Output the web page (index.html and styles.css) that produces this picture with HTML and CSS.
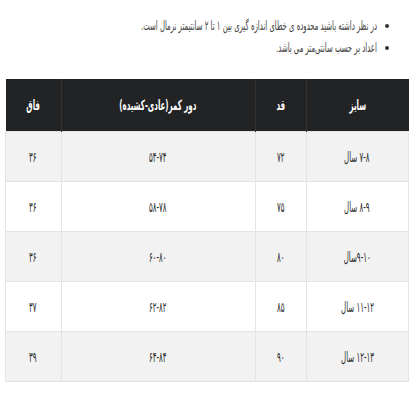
FILE: index.html
```html
<!DOCTYPE html>
<html lang="fa" dir="rtl">
<head>
<meta charset="utf-8">
<link rel="stylesheet" href="styles.css">
</head>
<body>
<div class="page">
  <ul class="notes">
    <li><span class="t">در نظر داشته باشید محدوده ی خطای اندازه گیری بین ۱ تا ۲ سانتیمتر نرمال است.</span></li>
    <li><span class="t">اعداد بر حسب سانتی‌متر می باشد.</span></li>
  </ul>
  <table class="sizes">
    <thead>
      <tr><th class="c1"><span class="t">سایز</span></th><th class="c2"><span class="t">قد</span></th><th class="c3"><span class="t">دور کمر(عادی-کشیده)</span></th><th class="c4"><span class="t">فاق</span></th></tr>
    </thead>
    <tbody>
      <tr><td><span class="t">۷-۸ سال</span></td><td><span class="t">۷۲</span></td><td><span class="t">۵۴-۷۴</span></td><td><span class="t">۳۶</span></td></tr>
      <tr><td><span class="t">۸-۹ سال</span></td><td><span class="t">۷۵</span></td><td><span class="t">۵۸-۷۸</span></td><td><span class="t">۳۶</span></td></tr>
      <tr><td><span class="t">۹-۱۰سال</span></td><td><span class="t">۸۰</span></td><td><span class="t">۶۰-۸۰</span></td><td><span class="t">۳۶</span></td></tr>
      <tr><td><span class="t">۱۱-۱۲ سال</span></td><td><span class="t">۸۵</span></td><td><span class="t">۶۲-۸۲</span></td><td><span class="t">۳۷</span></td></tr>
      <tr><td><span class="t">۱۲-۱۳ سال</span></td><td><span class="t">۹۰</span></td><td><span class="t">۶۴-۸۴</span></td><td><span class="t">۳۹</span></td></tr>
    </tbody>
  </table>
</div>
</body>
</html>
```
FILE: styles.css
```css
html, body { margin: 0; padding: 0; background: #fff; }
body {
  font-family: "DejaVu Sans Condensed", "DejaVu Sans", sans-serif;
  color: #333;
}
.page {
  width: 400px;
  padding: 15px 11px 0 9px;
}
.t {
  display: inline-block;
  white-space: nowrap;
}
.notes {
  margin: 0 0 20px 0;
  padding: 0 20px 0 0;
  list-style: none;
  font-size: 13px;
  line-height: 22px;
  color: #444;
}
.notes li {
  margin: 0;
  display: flex;
  align-items: center;
}
.notes li::before {
  content: "";
  width: 4px;
  height: 4px;
  border-radius: 50%;
  background: #333;
  margin-left: 8px;
  flex: none;
}
.notes .t {
  transform: scaleX(0.59);
  transform-origin: right center;
}
.sizes {
  width: 400px;
  border-collapse: collapse;
  table-layout: fixed;
}
.sizes th {
  background: #222324;
  color: #fff;
  font-weight: bold;
  font-size: 14px;
  height: 52px;
  padding: 0;
  border-left: 1px solid #333;
}
.sizes th .t { transform: scaleX(0.56); }
.sizes th:last-child { border-left: none; }
.c1 { width: 102px; }
.c2 { width: 50px; }
.c3 { width: 193px; }
.c4 { width: 55px; }
.sizes td {
  height: 49px;
  padding: 0;
  text-align: center;
  font-size: 14px;
  color: #2a2a2a;
  border: 1px solid #e4e4e4;
}
.sizes td .t { transform: scaleX(0.56); }
.sizes tbody tr:nth-child(odd) td { background: #f2f2f2; }
.sizes tbody tr:nth-child(even) td { background: #fff; }
```
